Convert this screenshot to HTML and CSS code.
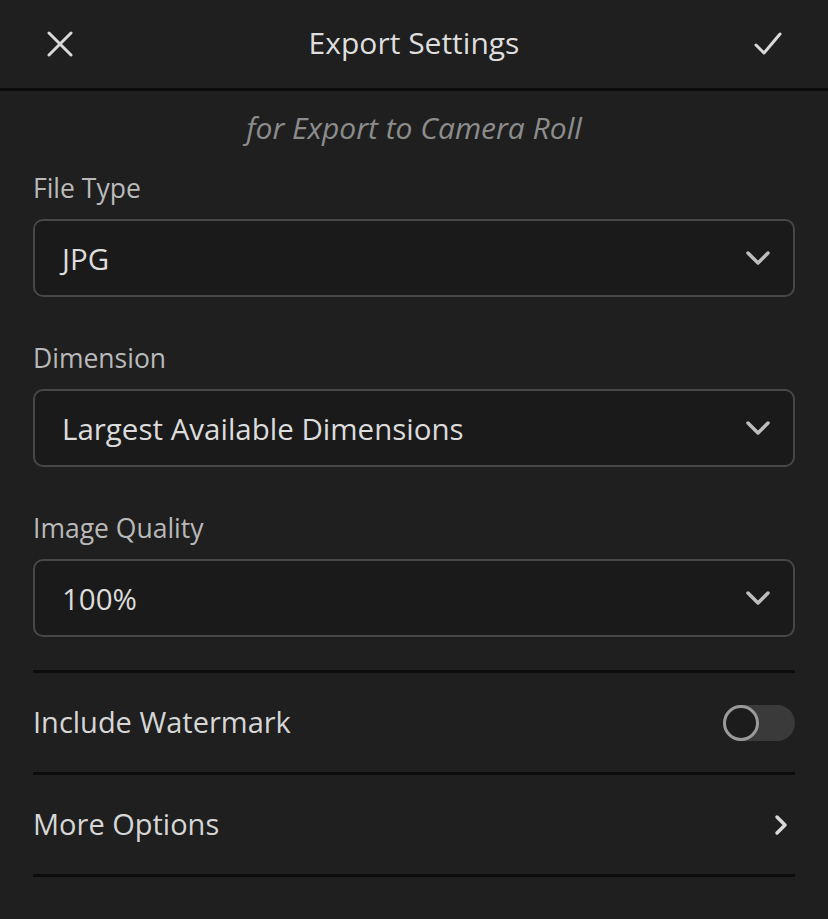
FILE: index.html
```html
<!DOCTYPE html>
<html lang="en">
<head>
    <meta charset="UTF-8">
    <meta name="viewport" content="width=device-width, initial-scale=1.0">
    <title>Export Settings</title>
    <link rel="stylesheet" href="styles.css">
</head>
<body>
    <header class="topbar">
        <button class="icon-btn" type="button" aria-label="Close">
            <svg width="26" height="26" viewBox="0 0 26 26"><path d="M2 2 L24 24 M24 2 L2 24" stroke="#d9d9d9" stroke-width="3" stroke-linecap="round" fill="none"/></svg>
        </button>
        <h1>Export Settings</h1>
        <button class="icon-btn done" type="button" aria-label="Done">
            <svg width="28" height="26" viewBox="0 0 28 26"><path d="M2 14 L10 22 L26 3" stroke="#d9d9d9" stroke-width="3" stroke-linecap="round" stroke-linejoin="round" fill="none"/></svg>
        </button>
    </header>

    <main class="content">
        <p class="subtitle">for Export to Camera Roll</p>

        <div class="field">
            <label>File Type</label>
            <div class="select">
                <span>JPG</span>
                <svg class="chev" width="26" height="16" viewBox="0 0 26 16"><path d="M3 3 L13 13 L23 3" stroke="#bdbdbd" stroke-width="3.5" stroke-linecap="round" stroke-linejoin="round" fill="none"/></svg>
            </div>
        </div>

        <div class="field">
            <label>Dimension</label>
            <div class="select">
                <span>Largest Available Dimensions</span>
                <svg class="chev" width="26" height="16" viewBox="0 0 26 16"><path d="M3 3 L13 13 L23 3" stroke="#bdbdbd" stroke-width="3.5" stroke-linecap="round" stroke-linejoin="round" fill="none"/></svg>
            </div>
        </div>

        <div class="field">
            <label>Image Quality</label>
            <div class="select">
                <span>100%</span>
                <svg class="chev" width="26" height="16" viewBox="0 0 26 16"><path d="M3 3 L13 13 L23 3" stroke="#bdbdbd" stroke-width="3.5" stroke-linecap="round" stroke-linejoin="round" fill="none"/></svg>
            </div>
        </div>

        <div class="rows">
            <div class="row">
                <span>Include Watermark</span>
                <div class="toggle"><div class="knob"></div></div>
            </div>
            <div class="row">
                <span>More Options</span>
                <svg width="16" height="24" viewBox="0 0 16 24"><path d="M4 4 L12 12 L4 20" stroke="#d9d9d9" stroke-width="3.5" stroke-linecap="round" stroke-linejoin="round" fill="none"/></svg>
            </div>
        </div>
    </main>
</body>
</html>
```

FILE: styles.css
```css
/* General */
body {
    margin: 0;
    background: #1f1f1f;
    font-family: "Open Sans", "Noto Sans", sans-serif;
    color: #dcdcdc;
}

/* Top bar */
.topbar {
    height: 88px;
    border-bottom: 3px solid #0c0c0c;
    display: grid;
    grid-template-columns: 1fr auto 1fr;
    align-items: center;
    padding: 0 42px;
}

.topbar h1 {
    margin: 0;
    font-size: 30px;
    font-weight: 400;
    color: #dedede;
    padding-bottom: 3px;
}

.icon-btn {
    background: none;
    border: none;
    padding: 0;
    width: 36px;
    height: 36px;
    display: flex;
    align-items: center;
    justify-content: center;
}

.icon-btn.done {
    justify-self: end;
}

/* Content */
.content {
    padding: 0 33px;
}

.subtitle {
    margin: 0;
    padding: 17px 0 20px;
    line-height: 40px;
    text-align: center;
    font-style: italic;
    font-size: 30px;
    color: #8c8c8c;
}

.field {
    margin-bottom: 41px;
}

.field label {
    display: block;
    line-height: 40px;
    margin-bottom: 11px;
    font-size: 26.5px;
    color: #b9b9b9;
}

.select {
    height: 74px;
    border: 2px solid #474747;
    border-radius: 10px;
    background: #1a1a1a;
    display: flex;
    align-items: center;
    justify-content: space-between;
    padding: 0 22px 0 27px;
    font-size: 29.5px;
    color: #dcdcdc;
}

/* Rows */
.rows {
    margin-top: -8px;
    border-top: 3px solid #0c0c0c;
}

.row {
    height: 99px;
    border-bottom: 3px solid #0c0c0c;
    display: flex;
    align-items: center;
    justify-content: space-between;
    font-size: 29px;
    color: #d6d6d6;
}

.row span {
    padding-bottom: 3px;
}

.row svg {
    margin-right: 6px;
}

.toggle {
    width: 72px;
    height: 36px;
    border-radius: 18px;
    background: #3a3a3a;
    position: relative;
}

.knob {
    position: absolute;
    left: 0;
    top: 0;
    width: 30px;
    height: 30px;
    border-radius: 50%;
    border: 3px solid #9a9a9a;
    background: #1c1c1c;
}
```
